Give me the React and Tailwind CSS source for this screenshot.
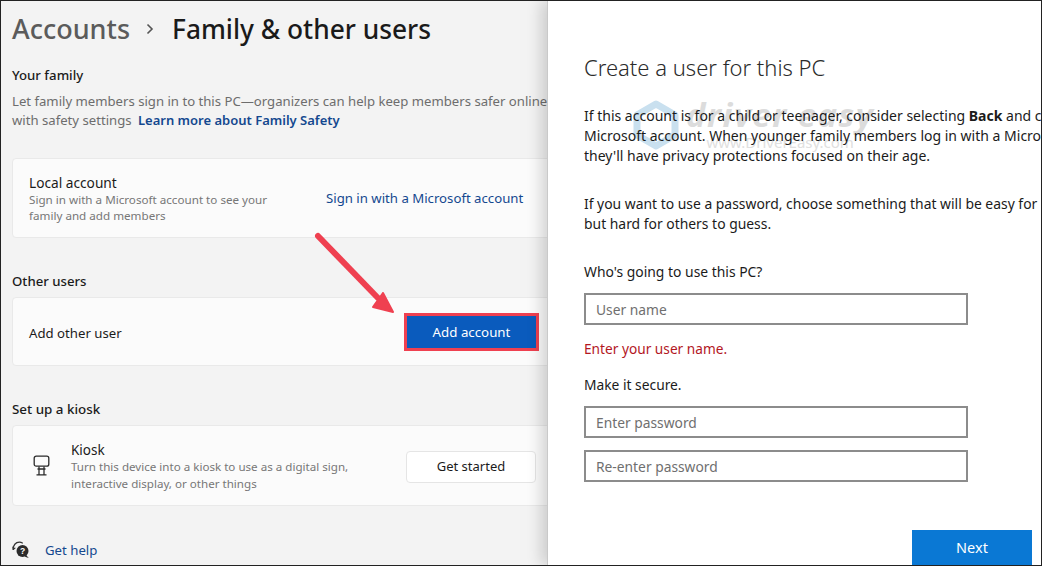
// Settings page with the "Create a user" dialog beside it
const KioskIcon = () => (
  <svg className="w-[17px] h-[21px] text-[#2b2b2b]" viewBox="0 0 17 21" fill="none" stroke="currentColor" strokeWidth="1.3">
    <rect x="1.2" y="1.2" width="14.6" height="10" rx="2" />
    <path d="M6 11.5V19.5M11 11.5V19.5M4.5 14h8M3.5 19.8h10" />
  </svg>
);

const HelpIcon = () => (
  <svg className="w-[18px] h-[18px]" viewBox="0 0 18 18" fill="none">
    <path d="M1.2 8.5C1 4.2 3.6 1.2 7.4 1.2c1.2 0 2.2.3 3 .8" stroke="#333" strokeWidth="1.2" strokeLinecap="round" />
    <path d="M1.2 8.5 0.8 6M1.2 8.5 3 7" stroke="#333" strokeWidth="1.1" strokeLinecap="round" />
    <circle cx="10.5" cy="10" r="6" fill="#2b2b2b" />
    <path d="M14 14l2.8 3-4-1.2z" fill="#2b2b2b" />
    <text x="10.5" y="13" textAnchor="middle" fontSize="8.5" fontWeight="700" fill="#fff" fontFamily="Liberation Sans, sans-serif">?</text>
  </svg>
);

const Arrow = () => (
  <svg className="absolute left-[309px] top-[227px] w-[90px] h-[90px]" viewBox="0 0 90 90" fill="none">
    <path d="M8 8L68 70" stroke="#ef4050" strokeWidth="6" strokeLinecap="round" />
    <path d="M83 84L73 65L63 79Z" fill="#ef4050" stroke="#ef4050" strokeWidth="2" strokeLinejoin="round" />
  </svg>
);

const Watermark = () => (
  <div className="absolute left-[85px] top-[99px] flex items-start gap-[7px] pointer-events-none">
    <svg className="w-[46px] h-[50px]" viewBox="0 0 46 50" fill="none">
      <path d="M23 4L42 15V35L23 46L4 35V15Z" stroke="#c9e0ef" strokeWidth="7" strokeLinejoin="round" />
    </svg>
    <div className="flex flex-col items-center -mt-[4px]">
      <span className="text-[33px] leading-[38px] italic font-bold tracking-[1.5px] text-[#dcdcdc] whitespace-nowrap">driver easy</span>
      <span className="text-[15px] leading-[16px] text-[#e0e0e0] whitespace-nowrap">www.DriverEasy.com</span>
    </div>
  </div>
);

const Field = ({ placeholder, className = '' }) => (
  <input
    placeholder={placeholder}
    className={`block w-[384px] h-[32px] border-2 border-[#8c8c8c] bg-white px-[10px] text-[13.8px] outline-none placeholder:text-[#6f6f6f] ${className}`}
  />
);

export default function App() {
  return (
    <div
      className="relative flex w-[1042px] h-[566px] overflow-hidden bg-white border border-[#222] text-[#1b1b1b]"
      style={{ fontFamily: '"Noto Sans", "Open Sans", sans-serif' }}
    >
      {/* Left: settings page */}
      <div className="relative w-[546px] shrink-0 overflow-hidden bg-[#f3f3f3] pl-[11px]">
        <div className="flex items-center h-[34px] mt-[11px] leading-[34px] font-medium whitespace-nowrap">
          <span className="text-[27px] text-[#5b5b5b]">Accounts</span>
          <svg className="w-[10px] h-[12px] ml-[15px] mr-[17px] text-[#555]" viewBox="0 0 10 12" fill="none" stroke="currentColor" strokeWidth="1.6">
            <path d="M2.5 1.5L7 6L2.5 10.5" />
          </svg>
          <span className="text-[26.3px] text-[#1a1a1a]">Family &amp; other users</span>
        </div>

        <h2 className="mt-[19px] text-[13.2px] leading-[20px] font-medium">Your family</h2>
        <p className="mt-[7px] text-[13.15px] leading-[19px] text-[#6d6d6d] whitespace-nowrap">
          Let family members sign in to this PC—organizers can help keep members safer online
          <br />
          with safety settings <a className="ml-[3px] text-[13px] font-semibold text-[#14488f]">Learn more about Family Safety</a>
        </p>

        <div className="mt-[28px] w-[560px] h-[80px] flex items-center rounded-[4px] bg-[#fbfbfb] border border-[#e9e9e9] pl-[16px]">
          <div className="w-[297px] pt-[1px]">
            <div className="text-[13.7px] leading-[18px]">Local account</div>
            <div className="text-[11.65px] leading-[16px] text-[#777]">
              Sign in with a Microsoft account to see your
              <br />
              family and add members
            </div>
          </div>
          <a className="pt-[1px] text-[13.2px] text-[#14488f] whitespace-nowrap">Sign in with a Microsoft account</a>
        </div>

        <h2 className="mt-[33px] text-[13.2px] leading-[20px] font-medium">Other users</h2>
        <div className="mt-[6px] w-[560px] h-[69px] flex items-center rounded-[4px] bg-[#fbfbfb] border border-[#e9e9e9] pl-[16px]">
          <span className="text-[13.2px] w-[375px] pt-[4px]">Add other user</span>
          <button className="w-[135px] h-[38px] pt-[2px] bg-[#0a5bbd] border-[3px] border-[#ef4050] text-white text-[13.3px]">
            Add account
          </button>
        </div>

        <h2 className="mt-[33px] text-[13.4px] leading-[20px] font-medium">Set up a kiosk</h2>
        <div className="mt-[6px] w-[560px] h-[81px] flex items-center rounded-[4px] bg-[#fbfbfb] border border-[#e9e9e9] pl-[20px]">
          <KioskIcon />
          <div className="ml-[21px] w-[335px] pt-[3px]">
            <div className="text-[13.5px] leading-[16px]">Kiosk</div>
            <div className="text-[11.6px] leading-[17px] text-[#777]">
              Turn this device into a kiosk to use as a digital sign,
              <br />
              interactive display, or other things
            </div>
          </div>
          <button className="w-[130px] h-[32px] mt-[2px] rounded-[4px] bg-white border border-[#e5e5e5] text-[13px]">Get started</button>
        </div>

        <div className="mt-[34px] flex items-center">
          <HelpIcon />
          <a className="ml-[15px] pt-[1px] text-[13.2px] text-[#14488f]">Get help</a>
        </div>

        <Arrow />
      </div>

      {/* Right: create user dialog */}
      <div className="relative flex-1 overflow-hidden bg-white border-l border-[#c9c9c9] pl-[36px] shadow-[-6px_0_14px_rgba(0,0,0,0.16)]">
        <Watermark />
        <div className="relative">
          <h1 className="mt-[48px] text-[22px] leading-[36px] font-light text-[#2b2b2b]">Create a user for this PC</h1>
          <p className="mt-[21px] text-[14px] leading-[20px] whitespace-nowrap">
            If this account is for a child or teenager, consider selecting <b>Back</b> and choose
            <br />
            Microsoft account. When younger family members log in with a Microsoft
            <br />
            they'll have privacy protections focused on their age.
          </p>
          <p className="mt-[28px] text-[13.9px] leading-[20px] whitespace-nowrap">
            If you want to use a password, choose something that will be easy for
            <br />
            but hard for others to guess.
          </p>
          <div className="mt-[28px] text-[13.9px] leading-[20px]">Who's going to use this PC?</div>
          <Field placeholder="User name" className="mt-[11px]" />
          <div className="mt-[14px] text-[13.7px] leading-[20px] text-[#b3171f]">Enter your user name.</div>
          <div className="mt-[16px] text-[13.8px] leading-[20px]">Make it secure.</div>
          <Field placeholder="Enter password" className="mt-[11px]" />
          <Field placeholder="Re-enter password" className="mt-[12px]" />
          <div className="flex justify-end pr-[9px] mt-[48px]">
            <button className="w-[120px] h-[36px] bg-[#0a78d4] text-white text-[14.5px]">Next</button>
          </div>
        </div>
      </div>
    </div>
  );
}
